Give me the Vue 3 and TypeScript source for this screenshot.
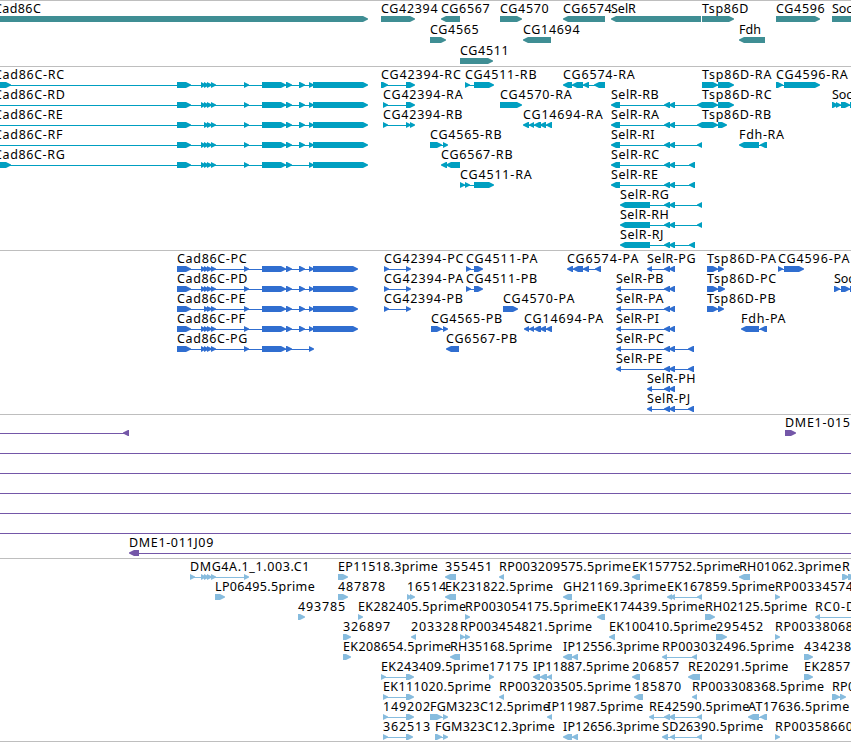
<template>
  <main class="browser">
    <section v-for="track in tracks" :key="track.name" class="track" :class="track.name">
      <svg :width="WIDTH" :height="track.height">
        <g v-for="(f, i) in track.features" :key="i">
          <rect
            class="shape"
            :x="lineOf(f)[0]"
            :y="f.row * track.pitch + 18"
            :width="lineOf(f)[1] - lineOf(f)[0]"
            height="1"
          />
          <polygon
            v-for="(b, j) in f.blocks"
            :key="j"
            class="shape"
            :points="arrow(b, f.dir, f.row * track.pitch + 15)"
          />
          <text
            v-if="f.label"
            :x="f.x"
            :y="f.row * track.pitch + 12"
            :textLength="labelWidth(f.label)"
            lengthAdjust="spacing"
          >{{ f.label }}</text>
        </g>
      </svg>
    </section>
  </main>
</template>

<script setup lang="ts">
type Block = [number, number]
type Dir = 'R' | 'L'

interface Feature {
  label: string
  row: number
  x: number
  dir: Dir
  blocks: Block[]
  line?: Block
}

interface Track {
  name: string
  height: number
  pitch: number
  features: Feature[]
}

const WIDTH = 851

const feat = (row: number, label: string, dir: Dir, blocks: Block[], line?: Block): Feature => ({
  row,
  label,
  dir,
  blocks,
  line,
  x: blocks.length ? blocks[0][0] : 0
})

// advance widths in px for the label font
const advances: Record<string, number> = {
  A: 8.1, C: 8.3, D: 9.1, E: 7, F: 6.7, G: 9, H: 8.9, I: 3.5, J: 3.6, K: 7.8, L: 6.8,
  M: 10.3, P: 7.4, R: 7.8, S: 6.7, T: 7.6, a: 6.8, c: 6.2, d: 7.7, e: 7, h: 7.5, i: 3.5,
  l: 3.4, m: 11.2, o: 7.4, p: 7.6, r: 4.9, s: 6.3, '.': 4.2, '-': 7.2, _: 7
}

const labelWidth = (label: string) =>
  [...label].reduce((sum, c) => sum + (advances[c] ?? 7.85), 0)

const lineOf = (f: Feature): Block => {
  if (f.line) return f.line
  return [f.blocks[0][0] + 2, f.blocks[f.blocks.length - 1][1] - 2]
}

const arrow = ([a, b]: Block, dir: Dir, y: number) => {
  const head = Math.min(5, b - a)
  if (dir === 'R') {
    return `${a},${y} ${b - head},${y} ${b},${y + 2.5} ${b},${y + 3.5} ${b - head},${y + 6} ${a},${y + 6}`
  }
  return `${b},${y} ${a + head},${y} ${a},${y + 2.5} ${a},${y + 3.5} ${a + head},${y + 6} ${b},${y + 6}`
}

const small: Block[] = [[201, 206], [204, 209], [207, 212], [211, 216]]
const cad = (smalls: Block[], with299: boolean, end: number): Block[] => [
  [177, 191],
  ...smalls,
  [244, 249],
  [262, 286],
  [286, 292],
  ...(with299 ? ([[299, 305]] as Block[]) : []),
  [309, 314],
  ...(end ? ([[313, end]] as Block[]) : [])
]
const cadRna = (row: number, name: string, blocks: Block[], first: boolean): Feature => ({
  row,
  label: name,
  x: -6,
  dir: 'R',
  blocks: first ? [[-6, 11], ...blocks] : blocks,
  line: [0, 366]
})

const selMid: Block[] = [[664, 670], [669, 675]]
const cg14694: Block[] = [[529, 534], [534, 541], [540, 546], [546, 552]]

const genes: Feature[] = [
  feat(0, 'Cad86C', 'R', [[-6, 368]]),
  feat(0, 'CG42394', 'R', [[381, 415]]),
  feat(0, 'CG6567', 'L', [[441, 460]]),
  feat(0, 'CG4570', 'R', [[500, 522]]),
  feat(0, 'CG6574', 'L', [[563, 605]]),
  feat(0, 'SelR', 'L', [[611, 701]]),
  feat(0, 'Tsp86D', 'R', [[702, 734]]),
  feat(0, 'CG4596', 'R', [[776, 820]]),
  feat(0, 'Soc', 'R', [[832, 870]]),
  feat(1, 'CG4565', 'R', [[430, 446]]),
  feat(1, 'CG14694', 'L', [[523, 551]]),
  feat(1, 'Fdh', 'L', [[739, 765]]),
  feat(2, 'CG4511', 'R', [[460, 493]])
]

const transcripts: Feature[] = [
  cadRna(0, 'Cad86C-RC', cad(small, true, 368), true),
  cadRna(1, 'Cad86C-RD', cad(small, true, 368), false),
  cadRna(2, 'Cad86C-RE', cad(small.slice(1), true, 368), false),
  cadRna(3, 'Cad86C-RF', cad(small, true, 368), false),
  cadRna(4, 'Cad86C-RG', cad(small, false, 368), true),
  feat(0, 'CG42394-RC', 'R', [[381, 388], [406, 415]]),
  feat(0, 'CG4511-RB', 'R', [[465, 470], [474, 494]]),
  feat(0, 'CG6574-RA', 'L', [[563, 572], [572, 583], [583, 589], [594, 605]]),
  feat(0, 'Tsp86D-RA', 'R', [[702, 718], [718, 734]]),
  feat(0, 'CG4596-RA', 'R', [[776, 783], [784, 820]]),
  feat(1, 'CG42394-RA', 'R', [[383, 388], [406, 415]]),
  feat(1, 'CG4570-RA', 'R', [[500, 522]]),
  feat(1, 'SelR-RB', 'L', [[611, 620], ...selMid, [697, 702]]),
  feat(1, 'Tsp86D-RC', 'R', [[702, 718], [718, 734]]),
  feat(1, 'Soc', 'R', [[832, 838], [836, 841], [841, 850], [850, 858]]),
  feat(2, 'CG42394-RB', 'R', [[383, 388], [406, 411], [410, 415]]),
  feat(2, 'CG14694-RA', 'L', [[523, 529], ...cg14694]),
  feat(2, 'SelR-RA', 'L', [[611, 620], ...selMid, [697, 702]]),
  feat(2, 'Tsp86D-RB', 'R', [[702, 718], [718, 727]]),
  feat(3, 'CG4565-RB', 'R', [[430, 442], [443, 448]]),
  feat(3, 'SelR-RI', 'L', [[611, 620], ...selMid, [697, 702]]),
  feat(3, 'Fdh-RA', 'L', [[739, 759], [760, 767]]),
  feat(4, 'CG6567-RB', 'L', [[441, 447], [446, 460]]),
  feat(4, 'SelR-RC', 'L', [[611, 620], ...selMid, [689, 695]]),
  feat(5, 'CG4511-RA', 'R', [[460, 465], [465, 470], [474, 494]]),
  feat(5, 'SelR-RE', 'L', [[611, 620], ...selMid, [689, 695]]),
  feat(6, 'SelR-RG', 'L', [[620, 650], ...selMid, [697, 702]]),
  feat(7, 'SelR-RH', 'L', [[620, 650], ...selMid, [697, 702]]),
  feat(8, 'SelR-RJ', 'L', [[620, 650], ...selMid, [689, 695]])
]

const proteins: Feature[] = [
  feat(0, 'Cad86C-PC', 'R', cad(small, true, 358)),
  feat(1, 'Cad86C-PD', 'R', cad(small, true, 358)),
  feat(2, 'Cad86C-PE', 'R', cad(small.slice(1), true, 358)),
  feat(3, 'Cad86C-PF', 'R', cad(small, true, 358)),
  feat(4, 'Cad86C-PG', 'R', cad(small, false, 0)),
  feat(0, 'CG42394-PC', 'R', [[384, 389], [406, 411]]),
  feat(0, 'CG4511-PA', 'R', [[466, 471], [474, 483]]),
  feat(0, 'CG6574-PA', 'L', [[567, 573], [573, 583], [583, 589], [595, 601]]),
  feat(0, 'SelR-PG', 'L', [[647, 652], ...selMid]),
  feat(0, 'Tsp86D-PA', 'R', [[707, 718], [718, 724]]),
  feat(0, 'CG4596-PA', 'R', [[778, 783], [784, 804]]),
  feat(1, 'CG42394-PA', 'R', [[384, 389], [406, 411]]),
  feat(1, 'CG4511-PB', 'R', [[466, 471], [474, 483]]),
  feat(1, 'SelR-PB', 'L', [[616, 621], ...selMid]),
  feat(1, 'Tsp86D-PC', 'R', [[707, 718], [718, 725]]),
  feat(1, 'Soc', 'R', [[834, 840], [841, 850], [850, 858]]),
  feat(2, 'CG42394-PB', 'R', [[384, 389], [406, 411]]),
  feat(2, 'CG4570-PA', 'R', [[503, 518]]),
  feat(2, 'SelR-PA', 'L', [[616, 621], ...selMid]),
  feat(2, 'Tsp86D-PB', 'R', [[707, 718], [718, 724]]),
  feat(3, 'CG4565-PB', 'R', [[431, 442], [443, 448]]),
  feat(3, 'CG14694-PA', 'L', [[524, 529], ...cg14694]),
  feat(3, 'SelR-PI', 'L', [[616, 621], ...selMid]),
  feat(3, 'Fdh-PA', 'L', [[741, 759], [760, 767]]),
  feat(4, 'CG6567-PB', 'L', [[446, 459]]),
  feat(4, 'SelR-PC', 'L', [[616, 621], ...selMid, [688, 694]]),
  feat(5, 'SelR-PE', 'L', [[616, 621], ...selMid, [688, 694]]),
  feat(6, 'SelR-PH', 'L', [[647, 652], ...selMid]),
  feat(7, 'SelR-PJ', 'L', [[647, 652], ...selMid, [688, 694]])
]

const bacs: Feature[] = [
  feat(0, '', 'L', [[123, 129]], [0, 125]),
  feat(0, 'DME1-015', 'R', [[785, 796]]),
  ...[1, 2, 3, 4, 5].map(row => feat(row, '', 'R', [], [0, WIDTH])),
  feat(6, 'DME1-011J09', 'L', [[129, 139]], [131, WIDTH])
]

const ests: Feature[] = [
  feat(0, 'DMG4A.1_1.003.C1', 'R', [[190, 195], ...small, [244, 249]]),
  feat(0, 'EP11518.3prime', 'R', [[338, 348]]),
  feat(0, '355451', 'L', [[445, 456]]),
  feat(0, 'RP003209575.5prime', 'L', [[499, 504]]),
  feat(0, 'EK157752.5prime', 'L', [[632, 640]]),
  feat(0, 'RH01062.3prime', 'L', [[739, 750]]),
  feat(0, 'R', 'R', [[842, 849], [848, 855]]),
  feat(1, 'LP06495.5prime', 'R', [[215, 225]]),
  feat(1, '487878', 'R', [[338, 348]]),
  feat(1, '16514', 'R', [[407, 412], [410, 415]]),
  feat(1, 'EK231822.5prime', 'L', [[445, 456]]),
  feat(1, 'GH21169.3prime', 'L', [[563, 572]]),
  feat(1, 'EK167859.5prime', 'L', [[667, 672], [670, 675], [697, 702]]),
  feat(1, 'RP00334574', 'R', [[775, 780]]),
  feat(2, '493785', 'R', [[298, 305]]),
  feat(2, 'EK282405.5prime', 'R', [[358, 363]]),
  feat(2, 'RP003054175.5prime', 'R', [[465, 470]]),
  feat(2, 'EK174439.5prime', 'L', [[597, 605]]),
  feat(2, 'RH02125.5prime', 'R', [[705, 715]]),
  feat(2, 'RC0-D', 'L', [[815, 820]], [817, WIDTH]),
  feat(3, '326897', 'R', [[343, 351]]),
  feat(3, '203328', 'L', [[411, 416]]),
  feat(3, 'RP003454821.5prime', 'R', [[460, 465], [465, 470]]),
  feat(3, 'EK100410.5prime', 'L', [[609, 615]]),
  feat(3, '295452', 'R', [[716, 727]]),
  feat(3, 'RP00338068', 'R', [[775, 780]]),
  feat(4, 'EK208654.5prime', 'R', [[343, 351]]),
  feat(4, 'RH35168.5prime', 'L', [[450, 460]]),
  feat(4, 'IP12556.3prime', 'L', [[563, 572], [572, 578]]),
  feat(4, 'RP003032496.5prime', 'L', [[662, 667], [692, 697]]),
  feat(4, '434238', 'R', [[804, 813]]),
  feat(5, 'EK243409.5prime', 'R', [[381, 386], [406, 414]]),
  feat(5, '17175', 'R', [[489, 494]]),
  feat(5, 'IP11887.5prime', 'L', [[533, 540], [540, 547], [547, 552]]),
  feat(5, '206857', 'L', [[632, 640]]),
  feat(5, 'RE20291.5prime', 'L', [[688, 700]]),
  feat(5, 'EK2857', 'R', [[804, 813]]),
  feat(6, 'EK111020.5prime', 'R', [[383, 388], [406, 414]]),
  feat(6, 'RP003203505.5prime', 'L', [[499, 504]]),
  feat(6, '185870', 'L', [[634, 643]]),
  feat(6, 'RP003308368.5prime', 'L', [[692, 697]]),
  feat(6, 'RP0', 'R', [[832, 840], [840, 846]]),
  feat(7, '149202', 'R', [[383, 388], [406, 414]]),
  feat(7, 'FGM323C12.5prime', 'R', [[430, 442], [443, 448]]),
  feat(7, 'IP11987.5prime', 'L', [[547, 552]]),
  feat(7, 'RE42590.5prime', 'L', [[649, 654], ...selMid, [697, 702]]),
  feat(7, 'AT17636.5prime', 'L', [[748, 759], [760, 767]]),
  feat(8, '362513', 'R', [[383, 388], [406, 413]]),
  feat(8, 'FGM323C12.3prime', 'R', [[435, 442], [443, 448]]),
  feat(8, 'IP12656.3prime', 'L', [[563, 572], [572, 578]]),
  feat(8, 'SD26390.5prime', 'L', [[662, 668], [670, 675], [697, 702]]),
  feat(8, 'RP00358660', 'R', [[775, 780]])
]

const tracks: Track[] = [
  { name: 'gene', height: 65, pitch: 21, features: genes },
  { name: 'transcript', height: 183, pitch: 20, features: transcripts },
  { name: 'protein', height: 163, pitch: 20, features: proteins },
  { name: 'bac', height: 143, pitch: 20, features: bacs },
  { name: 'est', height: 182, pitch: 20, features: ests }
]
</script>

<style>
body {
  margin: 0;
  background: #fff;
}
</style>

<style scoped>
.browser {
  width: 851px;
  overflow: hidden;
  border-bottom: 1px solid #bebebe;
}

.track {
  border-top: 1px solid #bebebe;
}

svg {
  display: block;
}

text {
  font-family: "Noto Sans", "DejaVu Sans", sans-serif;
  font-size: 12.5px;
  fill: #000;
}

.gene .shape {
  fill: #3f8e94;
}

.transcript .shape {
  fill: #009fc1;
}

.protein .shape {
  fill: #306ed0;
}

.bac .shape {
  fill: #7457a8;
}

.est .shape {
  fill: #87bcde;
}
</style>
